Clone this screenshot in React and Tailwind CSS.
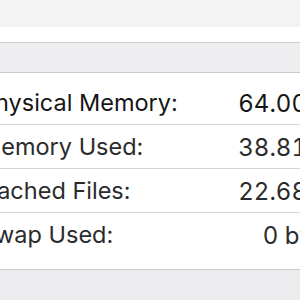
export default function App() {
  const rows = [
    { label: "Physical Memory:", value: "64.00 GB", dark: true },
    { label: "Memory Used:", value: "38.81 GB" },
    { label: "Cached Files:", value: "22.68 GB" },
    { label: "Swap Used:", value: "0 bytes" },
  ];
  return (
    <div
      className="w-[300px] h-[300px] overflow-hidden bg-white flex flex-col"
      style={{ fontFamily: "Inter, 'Liberation Sans', sans-serif" }}
    >
      <div className="h-[27px] bg-[#f3f3f3] shrink-0" />
      <div className="h-[15px] bg-white shrink-0" />
      <div className="h-[31px] bg-[#eeeef0] border-y border-[#cbcbcb] shrink-0" />
      <div className="pt-[8px] pb-[12px] bg-white shrink-0 overflow-hidden">
        {rows.map((r, i) => (
          <div
            key={r.label}
            className={
              "h-[44px] flex items-center justify-between ml-[-20px] mr-[-47px] " +
              (i < rows.length - 1 ? "border-b border-[#d4d4d4]" : "")
            }
          >
            <span
              className={
                "text-[23.5px] whitespace-nowrap " +
                (r.dark ? "text-[#161616]" : "text-[#2b2b2b]")
              }
            >
              {r.label}
            </span>
            <span
              className={
                "text-[24px] whitespace-nowrap tabular-nums pt-[2px] " +
                (r.dark ? "text-[#161616]" : "text-[#2b2b2b]")
              }
            >
              {r.value}
            </span>
          </div>
        ))}
      </div>
      <div className="flex-1 bg-[#ececee] border-t border-[#cbcbcb]" />
    </div>
  );
}
